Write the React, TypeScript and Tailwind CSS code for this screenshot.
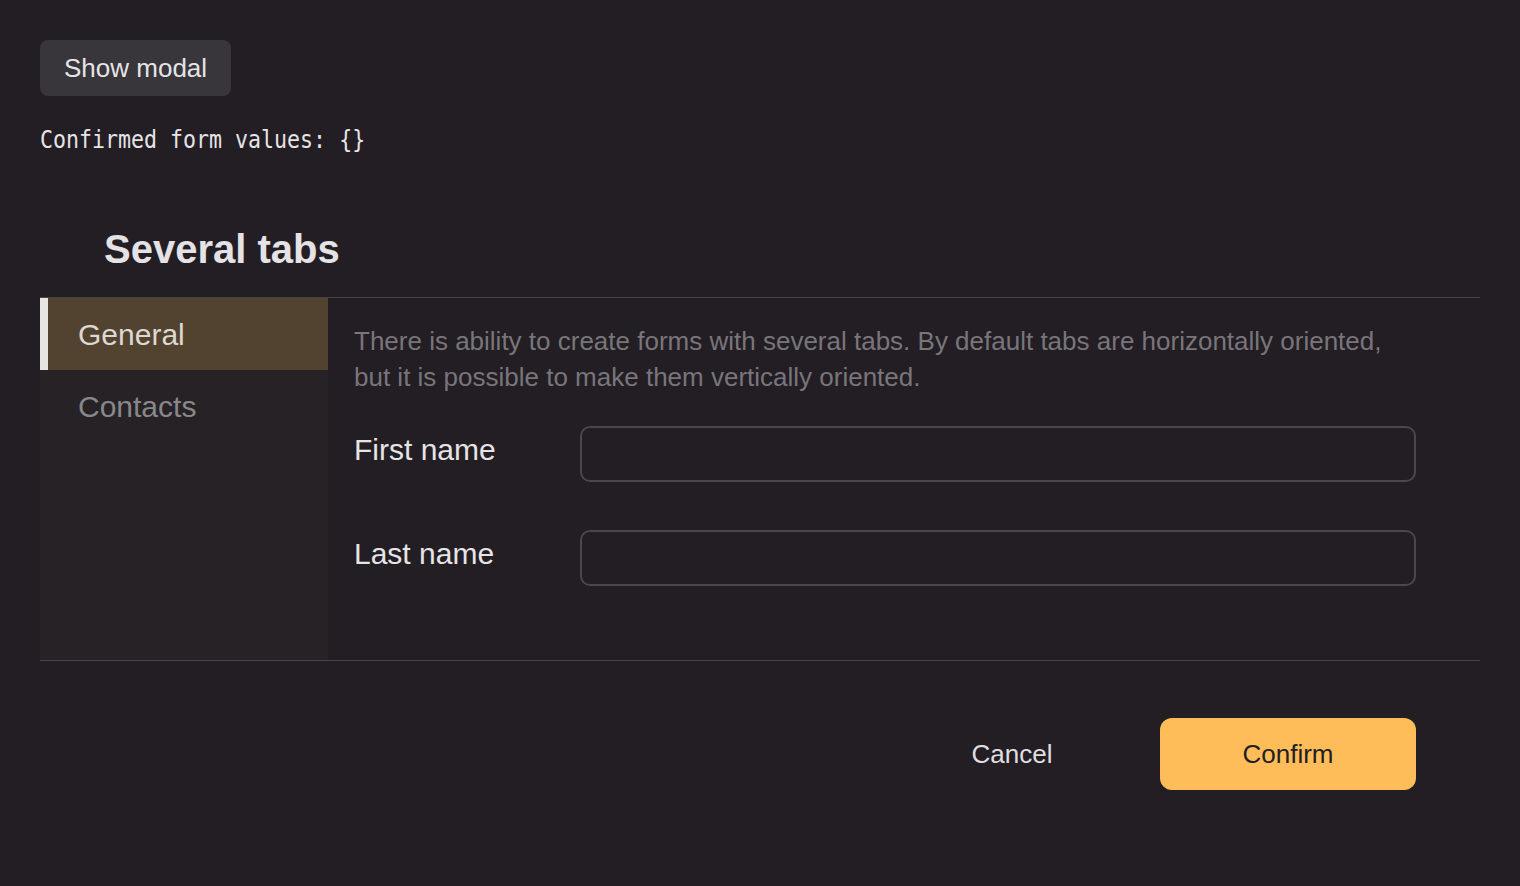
import { useState } from 'react'

const TABS = ['General', 'Contacts']

const FIELDS = [
  { id: 'firstName', label: 'First name' },
  { id: 'lastName', label: 'Last name' },
]

export default function App() {
  const [active, setActive] = useState('General')
  const [values, setValues] = useState<Record<string, string>>({})

  return (
    <div className="min-h-screen bg-[#221e23] px-10 pt-10 font-['Liberation_Sans',Arial,sans-serif] text-[#e6e4e6]">
      <button className="h-14 rounded-lg bg-[#38353b] px-6 text-[26px] leading-none text-[#e6e4e6]">
        Show modal
      </button>

      <div className="mt-[28px] h-8">
        <pre className="inline-block origin-left scale-x-[0.875] font-['DejaVu_Sans_Mono',monospace] text-[24.7px] leading-[32px] text-[#e6e4e6]">
          Confirmed form values: {'{}'}
        </pre>
      </div>

      {/* Form */}
      <h2 className="mt-[69px] pl-16 text-[40px] font-bold leading-[48px] text-[#e4e2e4]">Several tabs</h2>

      <div className="mt-6 flex border-y border-[#48444a]">
        <div className="flex w-[288px] shrink-0 flex-col bg-[#262226]">
          {TABS.map((tab) => (
            <button
              key={tab}
              onClick={() => setActive(tab)}
              className={`flex h-[72px] items-center border-l-8 pl-[30px] text-left text-[30px] ${
                active === tab
                  ? 'border-[#e8e6e3] bg-[#524331] text-[#ddd8d0]'
                  : 'border-transparent text-[#8a878b]'
              }`}
            >
              {tab}
            </button>
          ))}
        </div>

        <div className="flex-1 pb-[74px] pl-[26px] pr-16 pt-[25px]">
          <p className="max-w-[1040px] text-[26px] leading-[36px] text-[#79757b]">
            There is ability to create forms with several tabs. By default tabs are horizontally oriented, but it is
            possible to make them vertically oriented.
          </p>
          <div className="mt-[31px] flex flex-col gap-12">
            {FIELDS.map((f) => (
              <div key={f.id} className="flex items-start">
                <label htmlFor={f.id} className="w-[226px] shrink-0 text-[30px] leading-[48px] text-[#e6e4e6]">
                  {f.label}
                </label>
                <input
                  id={f.id}
                  value={values[f.id] ?? ''}
                  onChange={(e) => setValues({ ...values, [f.id]: e.target.value })}
                  className="h-14 flex-1 rounded-[10px] border-2 border-[#4a464d] bg-transparent px-4 text-[26px] outline-none"
                />
              </div>
            ))}
          </div>
        </div>
      </div>

      <div className="mt-[57px] flex justify-end gap-5 pr-16">
        <button className="h-[72px] w-64 rounded-xl text-[26px] text-[#e0dee0]">Cancel</button>
        <button className="h-[72px] w-64 rounded-xl bg-[#ffbd59] text-[26px] text-[#221e23]">Confirm</button>
      </div>
    </div>
  )
}
